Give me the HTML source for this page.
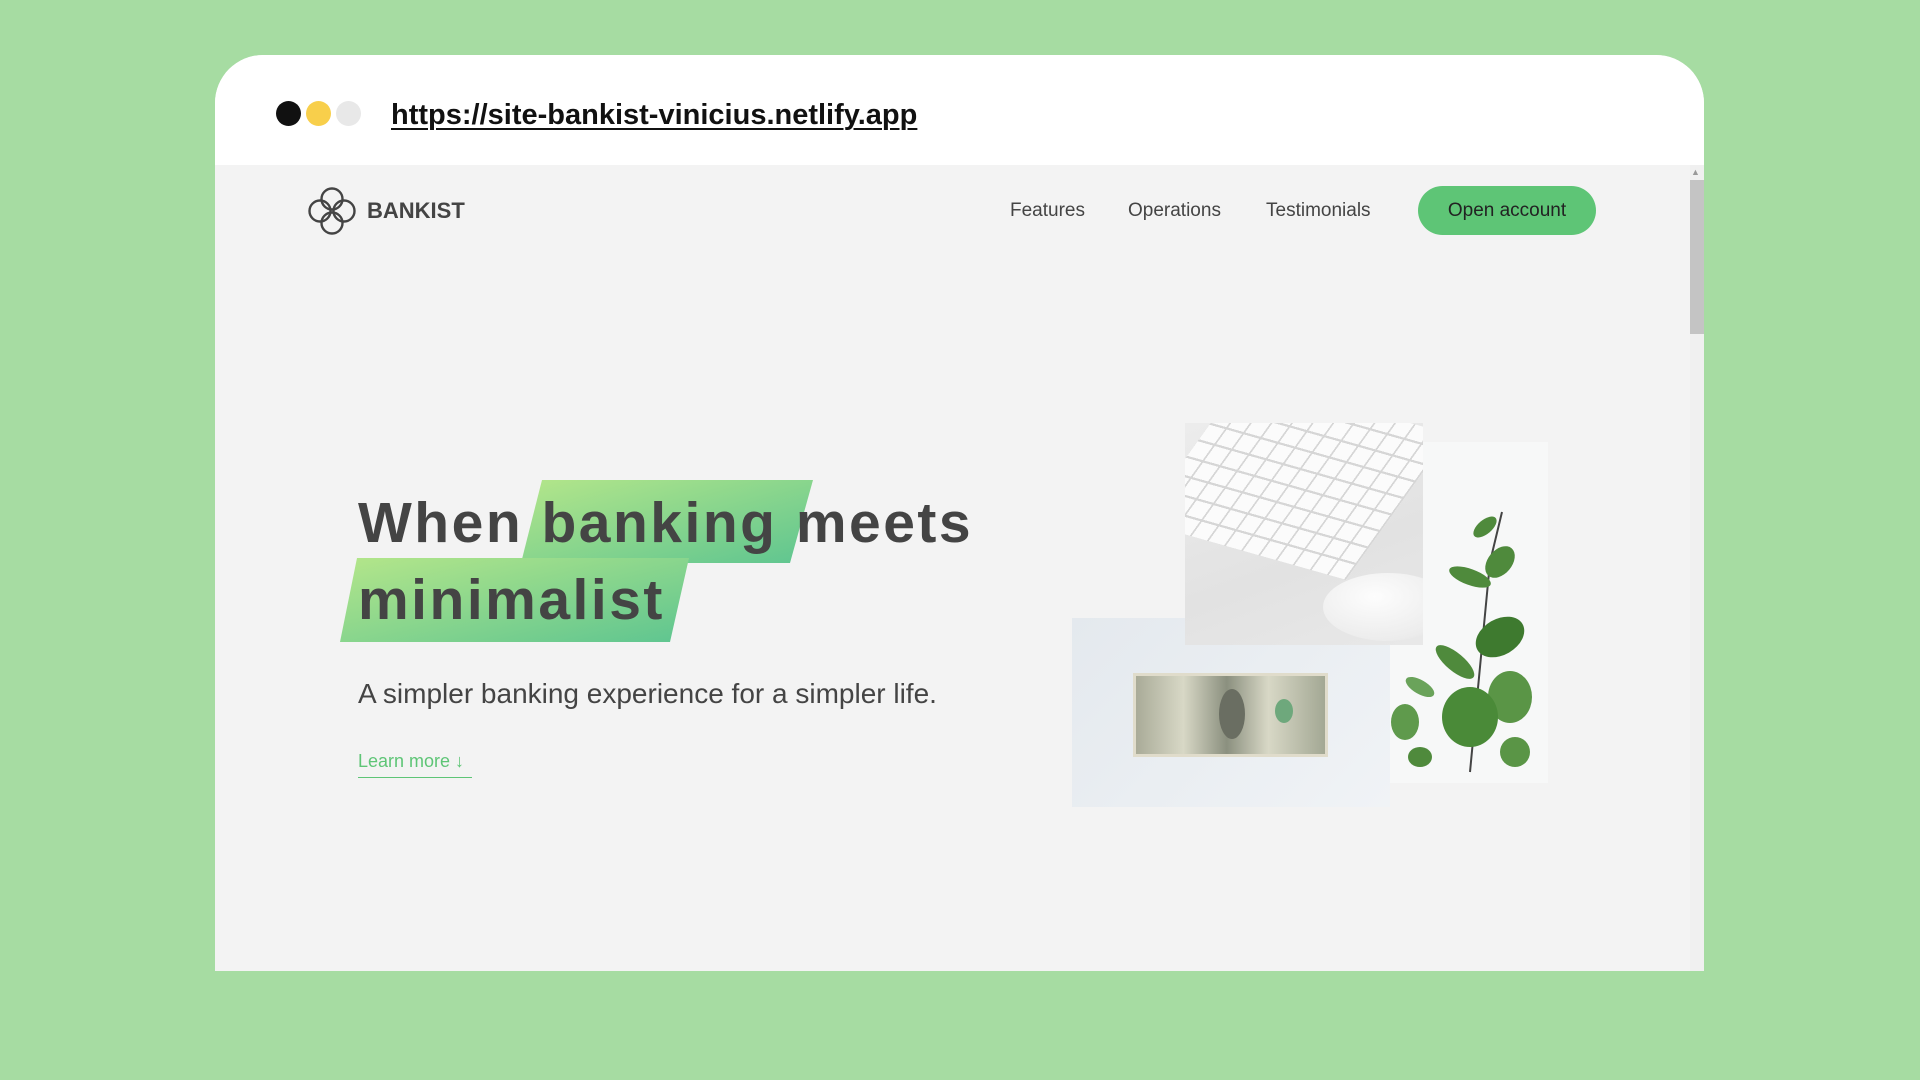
<!DOCTYPE html>
<html><head><meta charset="utf-8"><style>
*{margin:0;padding:0;box-sizing:border-box}
body{width:1920px;height:1080px;background:#a6dca2;position:relative;overflow:hidden;font-family:"Liberation Sans",sans-serif}
.card{position:absolute;left:215px;top:55px;width:1489px;height:916px;background:#f3f3f3;border-radius:48px 48px 0 0;overflow:hidden}
.head{position:absolute;left:0;top:0;width:100%;height:110px;background:#fff}
.dot{position:absolute;top:46px;width:25px;height:25px;border-radius:50%}
.url{position:absolute;left:176px;top:44px;font-size:29px;font-weight:bold;color:#111;text-decoration:underline;text-decoration-thickness:2px;text-underline-offset:4px}
.sb{position:absolute;left:1475px;top:110px;width:14px;height:806px;background:#f0f0f0}
.thumb{position:absolute;left:1475px;top:125px;width:14px;height:154px;background:#c4c4c4}
.abs{position:absolute}
.nav{font-size:19px;color:#444;top:145px}
.btn{left:1203px;top:131px;width:178px;height:49px;border-radius:25px;background:#5ec576;color:#222;font-size:19px;text-align:center;line-height:49px}
h1{position:absolute;left:143px;font-size:57px;font-weight:bold;color:#444;letter-spacing:2.5px;white-space:nowrap}
</style></head><body>
<div class="card">
 <div class="head">
  <div class="dot" style="left:61px;background:#111"></div>
  <div class="dot" style="left:91px;background:#f8cf4b"></div>
  <div class="dot" style="left:121px;background:#e8e8e8"></div>
  <div class="url">https://site-bankist-vinicius.netlify.app</div>
 </div>
 <div class="sb"></div><div class="thumb"></div>
 <div class="abs" style="left:1476px;top:112px;font-size:9px;color:#999">▲</div>
 <svg class="abs" style="left:92px;top:131px" width="50" height="50" viewBox="0 0 50 50" fill="none" stroke="#444" stroke-width="2.4">
  <circle cx="25" cy="13" r="10.5"/><circle cx="25" cy="37" r="10.5"/><circle cx="13" cy="25" r="10.5"/><circle cx="37" cy="25" r="10.5"/>
 </svg>
 <div class="abs" style="left:152px;top:143px;font-size:22px;font-weight:bold;color:#444">BANKIST</div>
 <div class="abs nav" style="left:795px">Features</div>
 <div class="abs nav" style="left:913px">Operations</div>
 <div class="abs nav" style="left:1051px">Testimonials</div>
 <div class="abs btn">Open account</div>

 <svg class="abs" style="left:0;top:0" width="1489" height="916">
  <defs><linearGradient id="g" x1="0" y1="0" x2="1" y2="1"><stop offset="0" stop-color="#b4e68a"/><stop offset="1" stop-color="#5ec590"/></linearGradient></defs>
  <polygon points="327,425 598,425 575,508 306,508" fill="url(#g)"/>
  <polygon points="142,503 474,503 455,587 125,587" fill="url(#g)"/>
 </svg>
 <h1 style="top:435px">When banking meets</h1>
 <h1 style="top:512px">minimalist</h1>
 <div class="abs" style="left:143px;top:623px;font-size:28px;color:#444;white-space:nowrap">A simpler banking experience for a simpler life.</div>
 <div class="abs" style="left:143px;top:696px;font-size:18px;color:#5ec576;border-bottom:1.5px solid #5ec576;padding-bottom:5px;width:114px">Learn more ↓</div>

 <!-- dollar -->
 <div class="abs" style="left:857px;top:563px;width:318px;height:189px;background:linear-gradient(135deg,#e4e9ee,#f0f3f6)"></div>
 <div class="abs" style="left:918px;top:618px;width:195px;height:84px;background:linear-gradient(90deg,#a9ab98,#d8d8c6 25%,#8b907f 48%,#d8d8c6 70%,#a3a894);border:3px solid #e0dccb"></div>
 <div class="abs" style="left:1004px;top:634px;width:26px;height:50px;border-radius:50%;background:#6a6e62"></div>
 <div class="abs" style="left:1060px;top:644px;width:18px;height:24px;border-radius:50%;background:#6ea87c"></div>
 <!-- plant -->
 <div class="abs" style="left:1175px;top:387px;width:158px;height:341px;background:#f7f8f8"></div>
 <svg class="abs" style="left:1175px;top:387px" width="158" height="341">
  <path d="M80 330 L100 120 L112 70" stroke="#444" stroke-width="2" fill="none"/>
  <g fill="#4f8a3c">
   <ellipse cx="95" cy="85" rx="14" ry="7" transform="rotate(-40 95 85)"/>
   <ellipse cx="110" cy="120" rx="18" ry="12" transform="rotate(-50 110 120)"/>
   <ellipse cx="80" cy="135" rx="22" ry="8" transform="rotate(20 80 135)"/>
   <ellipse cx="110" cy="195" rx="26" ry="18" transform="rotate(-30 110 195)" fill="#3e7a2f"/>
   <ellipse cx="65" cy="220" rx="24" ry="9" transform="rotate(40 65 220)"/>
   <ellipse cx="120" cy="255" rx="22" ry="26" fill="#5a9546"/>
   <ellipse cx="80" cy="275" rx="28" ry="30" fill="#4a8a38"/>
   <ellipse cx="30" cy="245" rx="16" ry="7" transform="rotate(30 30 245)" fill="#6aa35a"/>
   <ellipse cx="15" cy="280" rx="14" ry="18" fill="#5f9a4c"/>
   <ellipse cx="30" cy="315" rx="12" ry="10" fill="#4f8a3c"/>
   <ellipse cx="125" cy="310" rx="15" ry="15" fill="#5a9546"/>
  </g>
 </svg>
 <!-- keyboard -->
 <div class="abs" style="left:970px;top:368px;width:238px;height:222px;background:linear-gradient(160deg,#ececec,#e2e2e2 60%,#e8e8e8);overflow:hidden">
  <div style="position:absolute;left:-10px;top:-20px;width:240px;height:150px;transform:skewX(-25deg) rotate(14deg);background:repeating-linear-gradient(90deg,#fbfbfb 0 18px,#d6d6d6 18px 20px);"></div>
  <div style="position:absolute;left:-10px;top:-20px;width:240px;height:150px;transform:skewX(-25deg) rotate(14deg);background:repeating-linear-gradient(0deg,transparent 0 15px,#d6d6d6 15px 17px)"></div>
  <div style="position:absolute;left:138px;top:150px;width:130px;height:68px;border-radius:50%;background:radial-gradient(ellipse at 40% 35%,#fdfdfd,#ececec 70%,#d8d8d8)"></div>
 </div>
</div>
</body></html>
